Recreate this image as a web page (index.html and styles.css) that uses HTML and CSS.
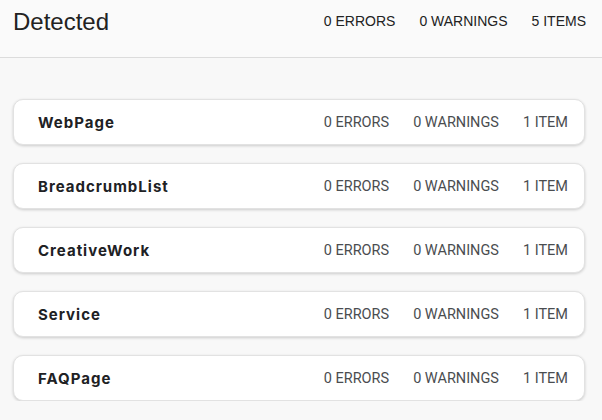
FILE: index.html
```html
<!DOCTYPE html>
<html lang="en">
<head>
<meta charset="utf-8">
<title>Detected</title>
<link rel="stylesheet" href="styles.css">
</head>
<body>
<header class="summary">
  <h1 class="summary-title">Detected</h1>
  <div class="summary-counts">
    <span>0 ERRORS</span>
    <span>0 WARNINGS</span>
    <span>5 ITEMS</span>
  </div>
</header>
<main class="types">
  <div class="type-card">
    <span class="type-name">WebPage</span>
    <div class="type-counts"><span>0 ERRORS</span><span>0 WARNINGS</span><span>1 ITEM</span></div>
  </div>
  <div class="type-card">
    <span class="type-name">BreadcrumbList</span>
    <div class="type-counts"><span>0 ERRORS</span><span>0 WARNINGS</span><span>1 ITEM</span></div>
  </div>
  <div class="type-card">
    <span class="type-name">CreativeWork</span>
    <div class="type-counts"><span>0 ERRORS</span><span>0 WARNINGS</span><span>1 ITEM</span></div>
  </div>
  <div class="type-card">
    <span class="type-name">Service</span>
    <div class="type-counts"><span>0 ERRORS</span><span>0 WARNINGS</span><span>1 ITEM</span></div>
  </div>
  <div class="type-card">
    <span class="type-name">FAQPage</span>
    <div class="type-counts"><span>0 ERRORS</span><span>0 WARNINGS</span><span>1 ITEM</span></div>
  </div>
</main>
</body>
</html>
```

FILE: styles.css
```css
html, body {
  margin: 0;
  padding: 0;
  background: #f8f8f8;
  color: #202124;
}

.summary {
  height: 58px;
  box-sizing: border-box;
  border-bottom: 1px solid #dcdcdc;
  background: #fafafa;
  display: flex;
  align-items: flex-start;
  justify-content: space-between;
  padding: 0 16px 0 13px;
  font-family: "Liberation Sans", Arial, sans-serif;
}

.summary-title {
  margin: 8px 0 0;
  font-size: 24px;
  font-weight: 400;
  line-height: 28px;
  color: #222;
}

.summary-counts {
  display: flex;
  gap: 24px;
  margin-top: 13px;
  font-size: 14px;
  line-height: 17px;
  color: #222;
}

.types {
  display: flex;
  flex-direction: column;
  gap: 18px;
  padding: 41px 17px 0 13px;
}

.type-card {
  height: 46px;
  box-sizing: border-box;
  background: #fff;
  border: 1px solid #e2e2e2;
  border-radius: 10px;
  box-shadow: 0 1px 3px rgba(0, 0, 0, 0.18);
  display: flex;
  align-items: center;
  justify-content: space-between;
  padding: 0 16px 0 24px;
}

.type-name {
  font-family: Inter, Roboto, sans-serif;
  font-weight: 700;
  font-size: 15px;
  letter-spacing: 1px;
  color: #202124;
}

.type-counts {
  display: flex;
  gap: 24px;
  font-family: Roboto, "Noto Sans", sans-serif;
  font-size: 14.5px;
  color: #4a4d50;
}
```
